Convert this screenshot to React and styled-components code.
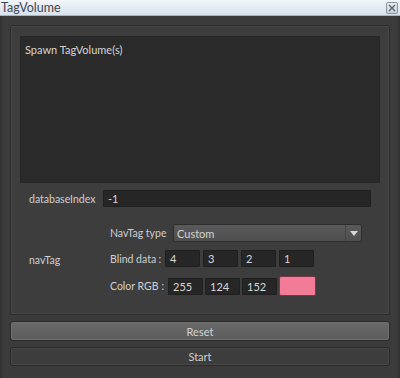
import React from "react";
import styled, { createGlobalStyle } from "styled-components";

const Global = createGlobalStyle`
  html, body { margin: 0; padding: 0; background: #3b3b3b; }
  * { box-sizing: border-box; }
`;

const Window = styled.div`
  width: 400px;
  height: 378px;
  display: flex;
  flex-direction: column;
  background: #3b3b3b;
  font-family: Lato, "Liberation Sans", sans-serif;
  font-size: 11px;
  color: #cfcfcf;
  border-left: 2px solid #333;
  border-right: 2px solid #333;
`;

const TitleBar = styled.div`
  height: 16px;
  margin: 0 -2px;
  display: flex;
  align-items: center;
  justify-content: space-between;
  padding: 0 2px 0 1px;
  background: linear-gradient(#f3f6fa, #d8e1ec);
  border-bottom: 1px solid #a9b4c2;
  color: #3f4650;
  font-size: 12.5px;
`;

const CloseBox = styled.div`
  width: 12px;
  height: 12px;
  border: 1px solid #8a929c;
  border-radius: 2px;
  background: linear-gradient(#e8ecf1, #c9d0d9);
  display: flex;
  align-items: center;
  justify-content: center;
`;

const Body = styled.div`
  flex: 1;
  display: flex;
  flex-direction: column;
  padding: 9px 8px 8px 8px;
  gap: 6px;
`;

const Group = styled.div`
  height: 290px;
  border: 1px solid #2c2c2c;
  box-shadow: inset 0 0 0 1px #474747;
  border-radius: 2px;
  background: #3d3d3d;
  padding: 10px 9px 0 9px;
  display: flex;
  flex-direction: column;
`;

const Log = styled.div`
  height: 147px;
  background: #2a2a2a;
  border: 1px solid #262626;
  padding: 6px 4px;
  color: #d6d6d6;
`;

const Row = styled.div`
  display: grid;
  grid-template-columns: 74px 1fr;
  align-items: center;
  padding-left: 9px;
  margin-top: ${({ $top }) => $top}px;
`;

const Label = styled.span`
  color: #cfcfcf;
  white-space: pre;
  width: ${({ $w }) => ($w ? `${$w}px` : "auto")};
  flex: none;
  display: flex;
  justify-content: space-between;
  font-size: 10.5px;
`;

const LineInput = styled.div`
  height: 17px;
  width: ${({ $w }) => ($w ? `${$w}px` : "auto")};
  margin-right: ${({ $mr }) => $mr || 0}px;
  background: #262626;
  border: 1px solid #1f1f1f;
  border-radius: 1px;
  padding: 0 4px;
  display: flex;
  align-items: center;
  color: #d8d8d8;
`;

const SubForm = styled.div`
  display: flex;
  flex-direction: column;
  padding-left: 7px;
`;

const SubRow = styled.div`
  display: flex;
  align-items: center;
  gap: ${({ $gap }) => $gap}px;
  margin-top: ${({ $top }) => $top || 0}px;
`;

const Fields = styled.div`
  display: flex;
  align-items: center;
  gap: ${({ $gap }) => $gap}px;
`;

const Combo = styled.div`
  width: 189px;
  height: 18px;
  background: linear-gradient(#5a5a5a, #4f4f4f);
  border: 1px solid #2e2e2e;
  border-radius: 2px;
  display: flex;
  align-items: center;
  justify-content: space-between;
  padding: 0 0 0 3px;
  color: #d4d4d4;
`;

const Arrow = styled.div`
  width: 16px;
  height: 100%;
  border-left: 1px solid #444;
  display: flex;
  align-items: center;
  justify-content: center;
`;

const Swatch = styled.div`
  width: 37px;
  height: 20px;
  background: ${({ $c }) => $c};
  border: 1px solid #7a3446;
  border-radius: 2px;
`;

const Button = styled.div`
  height: ${({ $h }) => $h}px;
  border: 1px solid #2a2a2a;
  border-radius: 3px;
  display: flex;
  align-items: center;
  justify-content: center;
  color: ${({ $primary }) => ($primary ? "#d2d2d2" : "#d0d0d0")};
  background: ${({ $primary }) =>
    $primary ? "linear-gradient(#6a6a6a, #5c5c5c)" : "#3d3d3d"};
  box-shadow: inset 0 0 0 1px ${({ $primary }) => ($primary ? "#707070" : "#474747")};
`;

export default function App() {
  const blind = [4, 3, 2, 1];
  const rgb = [255, 124, 152];
  return (
    <Window>
      <Global />
      <TitleBar>
        <span>TagVolume</span>
        <CloseBox>
          <svg width="8" height="8" viewBox="0 0 8 8">
            <path d="M1 1L7 7M7 1L1 7" stroke="#5d6570" strokeWidth="1.4" />
          </svg>
        </CloseBox>
      </TitleBar>
      <Body>
        <Group>
          <Log>Spawn TagVolume(s)</Log>
          <Row $top={7}>
            <Label>databaseIndex</Label>
            <LineInput $mr={9}>-1</LineInput>
          </Row>
          <Row $top={17}>
            <Label>navTag</Label>
            <SubForm>
              <SubRow $gap={5}>
                <Label $w={58}>NavTag type</Label>
                <Combo>
                  <span>Custom</span>
                  <Arrow>
                    <svg width="8" height="5" viewBox="0 0 8 5">
                      <path d="M0 0H8L4 5Z" fill="#d8d8d8" />
                    </svg>
                  </Arrow>
                </Combo>
              </SubRow>
              <SubRow $gap={4} $top={8}>
                <Label $w={51}><span>Blind data</span><span>:</span></Label>
                <Fields $gap={3}>
                  {blind.map((v) => (
                    <LineInput key={v} $w={35}>{v}</LineInput>
                  ))}
                </Fields>
              </SubRow>
              <SubRow $gap={4} $top={9}>
                <Label $w={54}><span>Color RGB</span><span>:</span></Label>
                <Fields $gap={2}>
                  {rgb.map((v) => (
                    <LineInput key={v} $w={35}>{v}</LineInput>
                  ))}
                  <Swatch $c="#f27c97" />
                </Fields>
              </SubRow>
            </SubForm>
          </Row>
        </Group>
        <Button $h={20} $primary>Reset</Button>
        <Button $h={19}>Start</Button>
      </Body>
    </Window>
  );
}
